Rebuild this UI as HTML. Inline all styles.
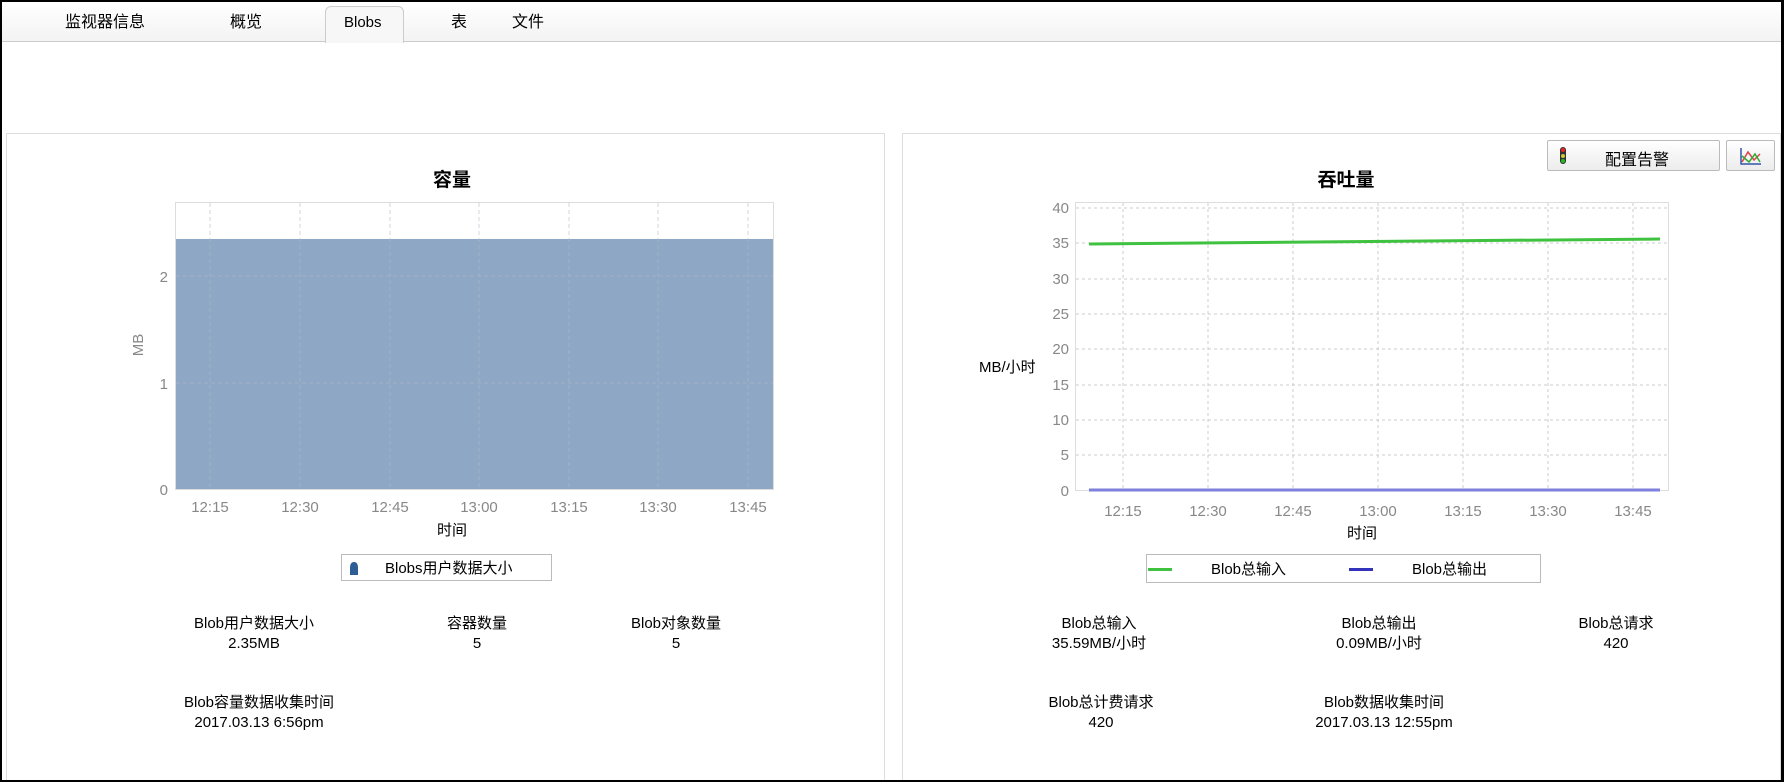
<!DOCTYPE html>
<html><head><meta charset="utf-8"><style>
*{margin:0;padding:0;box-sizing:border-box}
body{width:1784px;height:782px;background:#fff;font-family:"Liberation Sans","Noto Sans CJK SC",sans-serif;position:relative;overflow:hidden;color:#000}
.frame{position:absolute;left:0;top:0;width:1784px;height:782px;border:2px solid #000;border-right-width:3px}
.tabbar{position:absolute;left:2px;top:2px;width:1779px;height:40px;background:linear-gradient(#fff,#f3f3f3);border-bottom:1px solid #ccc}
.tab{position:absolute;top:14px;font-size:16px;line-height:18px}
.active{position:absolute;left:325px;top:6px;width:79px;height:37px;background:#f7f7f7;border:1px solid #ccc;border-bottom:none;border-radius:6px 6px 0 0}
.panel{position:absolute;top:133px;height:649px;border:1px solid #ddd;background:#fff}
.c{position:absolute;transform:translateX(-50%);white-space:nowrap;font-size:15px;text-align:center;line-height:20px}
svg{position:absolute;left:0;top:0}
.btn{position:absolute;border:1px solid #bbb;border-radius:2px;background:linear-gradient(#fff,#ececec)}
</style></head><body>
<div class="tabbar"></div>
<div class="active"></div>
<div class="tab" style="left:65px">监视器信息</div>
<div class="tab" style="left:230px">概览</div>
<div class="tab" style="left:344px;font-size:15px">Blobs</div>
<div class="tab" style="left:451px">表</div>
<div class="tab" style="left:512px">文件</div>

<div class="panel" style="left:6px;width:879px"></div>
<div class="panel" style="left:902px;width:879px"></div>

<svg width="1784" height="782" font-family="Liberation Sans, Noto Sans CJK SC, sans-serif">
 <!-- left chart -->
 <text x="452" y="186" font-size="19" font-weight="bold" text-anchor="middle">容量</text>
 <rect x="175.5" y="202.5" width="598" height="287" fill="#fff" stroke="#ddd"/>
 <rect x="176" y="239" width="597" height="250" fill="#8ea7c5"/>
 <g stroke="#b0b8c8" stroke-dasharray="4,3" stroke-width="1" opacity="0.6">
  <line x1="210" y1="203" x2="210" y2="489"/><line x1="300" y1="203" x2="300" y2="489"/><line x1="390" y1="203" x2="390" y2="489"/><line x1="479" y1="203" x2="479" y2="489"/><line x1="569" y1="203" x2="569" y2="489"/><line x1="658" y1="203" x2="658" y2="489"/><line x1="748" y1="203" x2="748" y2="489"/>
  <line x1="176" y1="276" x2="773" y2="276"/><line x1="176" y1="383" x2="773" y2="383"/>
 </g>
 <g fill="#888" font-size="15" text-anchor="end">
  <text x="168" y="282">2</text><text x="168" y="389">1</text><text x="168" y="495">0</text>
 </g>
 <text x="143" y="345" font-size="15" fill="#888" text-anchor="middle" transform="rotate(-90 143 345)">MB</text>
 <g fill="#888" font-size="15" text-anchor="middle">
  <text x="210" y="512">12:15</text><text x="300" y="512">12:30</text><text x="390" y="512">12:45</text><text x="479" y="512">13:00</text><text x="569" y="512">13:15</text><text x="658" y="512">13:30</text><text x="748" y="512">13:45</text>
 </g>
 <text x="452" y="535" font-size="15" text-anchor="middle">时间</text>
 <rect x="341.5" y="554.5" width="210" height="26" fill="#fff" stroke="#bbb"/>
 <path d="M350 575 L350 568 Q350 562 354 562 Q358 562 358 568 L358 575 Z" fill="#2f5e96"/>
 <text x="385" y="573" font-size="15">Blobs用户数据大小</text>

 <!-- right chart -->
 <text x="1346" y="186" font-size="19" font-weight="bold" text-anchor="middle">吞吐量</text>
 <rect x="1075.5" y="202.5" width="593" height="288" fill="#fff" stroke="#ddd"/>
 <g stroke="#ccc" stroke-dasharray="3,3" stroke-width="1">
  <line x1="1123" y1="203" x2="1123" y2="490"/><line x1="1208" y1="203" x2="1208" y2="490"/><line x1="1293" y1="203" x2="1293" y2="490"/><line x1="1378" y1="203" x2="1378" y2="490"/><line x1="1463" y1="203" x2="1463" y2="490"/><line x1="1548" y1="203" x2="1548" y2="490"/><line x1="1633" y1="203" x2="1633" y2="490"/>
  <line x1="1076" y1="208" x2="1668" y2="208"/><line x1="1076" y1="243" x2="1668" y2="243"/><line x1="1076" y1="279" x2="1668" y2="279"/><line x1="1076" y1="314" x2="1668" y2="314"/><line x1="1076" y1="349" x2="1668" y2="349"/><line x1="1076" y1="385" x2="1668" y2="385"/><line x1="1076" y1="420" x2="1668" y2="420"/><line x1="1076" y1="455" x2="1668" y2="455"/>
 </g>
 <g fill="#888" font-size="15" text-anchor="end">
  <text x="1069" y="213">40</text><text x="1069" y="248">35</text><text x="1069" y="284">30</text><text x="1069" y="319">25</text><text x="1069" y="354">20</text><text x="1069" y="390">15</text><text x="1069" y="425">10</text><text x="1069" y="460">5</text><text x="1069" y="496">0</text>
 </g>
 <line x1="1089" y1="244" x2="1660" y2="239" stroke="#3fc23f" stroke-width="3"/>
 <line x1="1089" y1="490" x2="1660" y2="490" stroke="#7f7fdd" stroke-width="3"/>
 <text x="979" y="372" font-size="15">MB/小时</text>
 <g fill="#888" font-size="15" text-anchor="middle">
  <text x="1123" y="516">12:15</text><text x="1208" y="516">12:30</text><text x="1293" y="516">12:45</text><text x="1378" y="516">13:00</text><text x="1463" y="516">13:15</text><text x="1548" y="516">13:30</text><text x="1633" y="516">13:45</text>
 </g>
 <text x="1362" y="538" font-size="15" text-anchor="middle">时间</text>
 <rect x="1146.5" y="554.5" width="394" height="28" fill="#fff" stroke="#bbb"/>
 <rect x="1148" y="568" width="24" height="3" fill="#3fc23f"/>
 <text x="1211" y="574" font-size="15">Blob总输入</text>
 <rect x="1349" y="568" width="24" height="3" fill="#3333bb"/>
 <text x="1412" y="574" font-size="15">Blob总输出</text>
</svg>

<div class="btn" style="left:1547px;top:140px;width:173px;height:31px"></div>
<div style="position:absolute;left:1560px;top:147px;width:6px;height:17px;background:#333;border-radius:3px"></div>
<div style="position:absolute;left:1561px;top:148px;width:4px;height:4px;background:#e22;border-radius:50%"></div>
<div style="position:absolute;left:1561px;top:154px;width:4px;height:4px;background:#cc3;border-radius:50%"></div>
<div style="position:absolute;left:1561px;top:159px;width:4px;height:4px;background:#2b2;border-radius:50%"></div>
<div style="position:absolute;left:1605px;top:146px;font-size:16px">配置告警</div>
<div class="btn" style="left:1726px;top:140px;width:49px;height:31px"></div>
<svg style="left:1739px;top:146px" width="24" height="20"><path d="M2 2V18H22" stroke="#3355aa" fill="none" stroke-width="1.5"/><path d="M3 16 L9 6 L15 14 L21 8" stroke="#d44" fill="none" stroke-width="1.5"/><path d="M3 10 L10 16 L16 8 L21 16" stroke="#3a3" fill="none" stroke-width="1.5"/></svg>

<div class="c" style="left:254px;top:614px">Blob用户数据大小<br>2.35MB</div>
<div class="c" style="left:477px;top:614px">容器数量<br>5</div>
<div class="c" style="left:676px;top:614px">Blob对象数量<br>5</div>
<div class="c" style="left:259px;top:693px">Blob容量数据收集时间<br>2017.03.13 6:56pm</div>

<div class="c" style="left:1099px;top:614px">Blob总输入<br>35.59MB/小时</div>
<div class="c" style="left:1379px;top:614px">Blob总输出<br>0.09MB/小时</div>
<div class="c" style="left:1616px;top:614px">Blob总请求<br>420</div>
<div class="c" style="left:1101px;top:693px">Blob总计费请求<br>420</div>
<div class="c" style="left:1384px;top:693px">Blob数据收集时间<br>2017.03.13 12:55pm</div>

<div class="frame"></div>
</body></html>
